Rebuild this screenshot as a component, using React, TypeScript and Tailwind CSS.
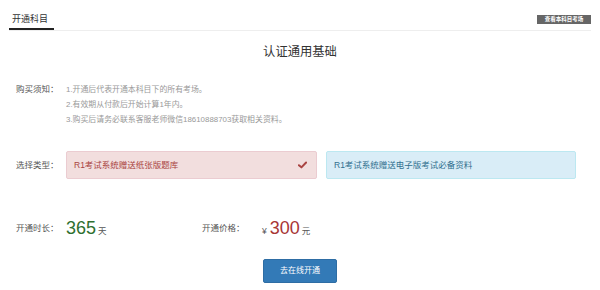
export default function App() {
  const notes = [
    '1.开通后代表开通本科目下的所有考场。',
    '2.有效期从付款后开始计算1年内。',
    '3.购买后请务必联系客服老师微信18610888703获取相关资料。',
  ];

  return (
    <div
      className="w-[600px] h-[290px] bg-white text-[#333] overflow-hidden"
      style={{ fontFamily: '"Liberation Sans", "Noto Sans CJK SC", sans-serif' }}
    >
      {/* tab header */}
      <div className="mx-[9px] flex justify-between items-start border-b border-[#eee] h-[31px]">
        <div className="pt-[13px] pb-[3px] px-[3px] w-[45px] leading-[12px] text-[9px] text-[#333] border-b-2 border-[#222]">
          开通科目
        </div>
        <div className="mt-[15px] w-[54px] h-[9px] bg-[#666] text-white text-[5.5px] leading-[9px] text-center font-bold">
          查看本科目考场
        </div>
      </div>

      {/* title */}
      <div className="mt-[13px] text-center text-[12.3px] leading-[16px] text-[#333]">认证通用基础</div>

      {/* notice */}
      <div className="mt-[22px] flex">
        <div className="w-[66px] pl-[16px] text-[8.5px] leading-[15px] text-[#555]">购买须知：</div>
        <div className="flex flex-col text-[7.9px] leading-[15px] text-[#999]">
          {notes.map((n) => (
            <span key={n}>{n}</span>
          ))}
        </div>
      </div>

      {/* type */}
      <div className="mt-[24px] flex items-center">
        <div className="w-[66px] pl-[16px] text-[8.5px] text-[#555]">选择类型：</div>
        <div className="flex gap-[9px]">
          <div className="w-[251px] h-[28px] rounded-[2px] bg-[#f2dede] border border-[#ebccd1] text-[#a94442] flex items-center justify-between pl-[7px] pr-[9px] text-[8.5px]">
            <span>R1考试系统赠送纸张版题库</span>
            <svg width="9" height="8" viewBox="0 0 10 8">
              <path d="M1 4.2 L3.8 6.6 L9 1.2" fill="none" stroke="#a94442" strokeWidth="2.2" strokeLinecap="round" strokeLinejoin="round" />
            </svg>
          </div>
          <div className="w-[250px] h-[28px] rounded-[2px] bg-[#d9edf7] border border-[#bce8f1] text-[#31708f] flex items-center pl-[7px] text-[8.5px]">
            R1考试系统赠送电子版考试必备资料
          </div>
        </div>
      </div>

      {/* duration & price */}
      <div className="mt-[37px] h-[24px] flex items-center">
        <div className="w-[66px] pl-[16px] text-[8.5px] text-[#555]">开通时长：</div>
        <div className="w-[136px] flex items-baseline gap-[2px]">
          <span className="text-[18px] leading-none text-[#2f6f2f]">365</span>
          <span className="text-[8.5px] text-[#555]">天</span>
        </div>
        <div className="w-[60px] text-[8.5px] text-[#555]">开通价格：</div>
        <div className="flex items-baseline gap-[2px]">
          <span className="text-[8.5px] text-[#555] mr-[1px]">¥</span>
          <span className="text-[18px] leading-none text-[#a83636]">300</span>
          <span className="text-[8.5px] text-[#555]">元</span>
        </div>
      </div>

      {/* button */}
      <div className="mt-[19px] flex justify-center">
        <button className="w-[74px] h-[24px] rounded-[2px] bg-[#337ab7] border border-[#2e6da4] text-white text-[8px]">
          去在线开通
        </button>
      </div>
    </div>
  );
}
